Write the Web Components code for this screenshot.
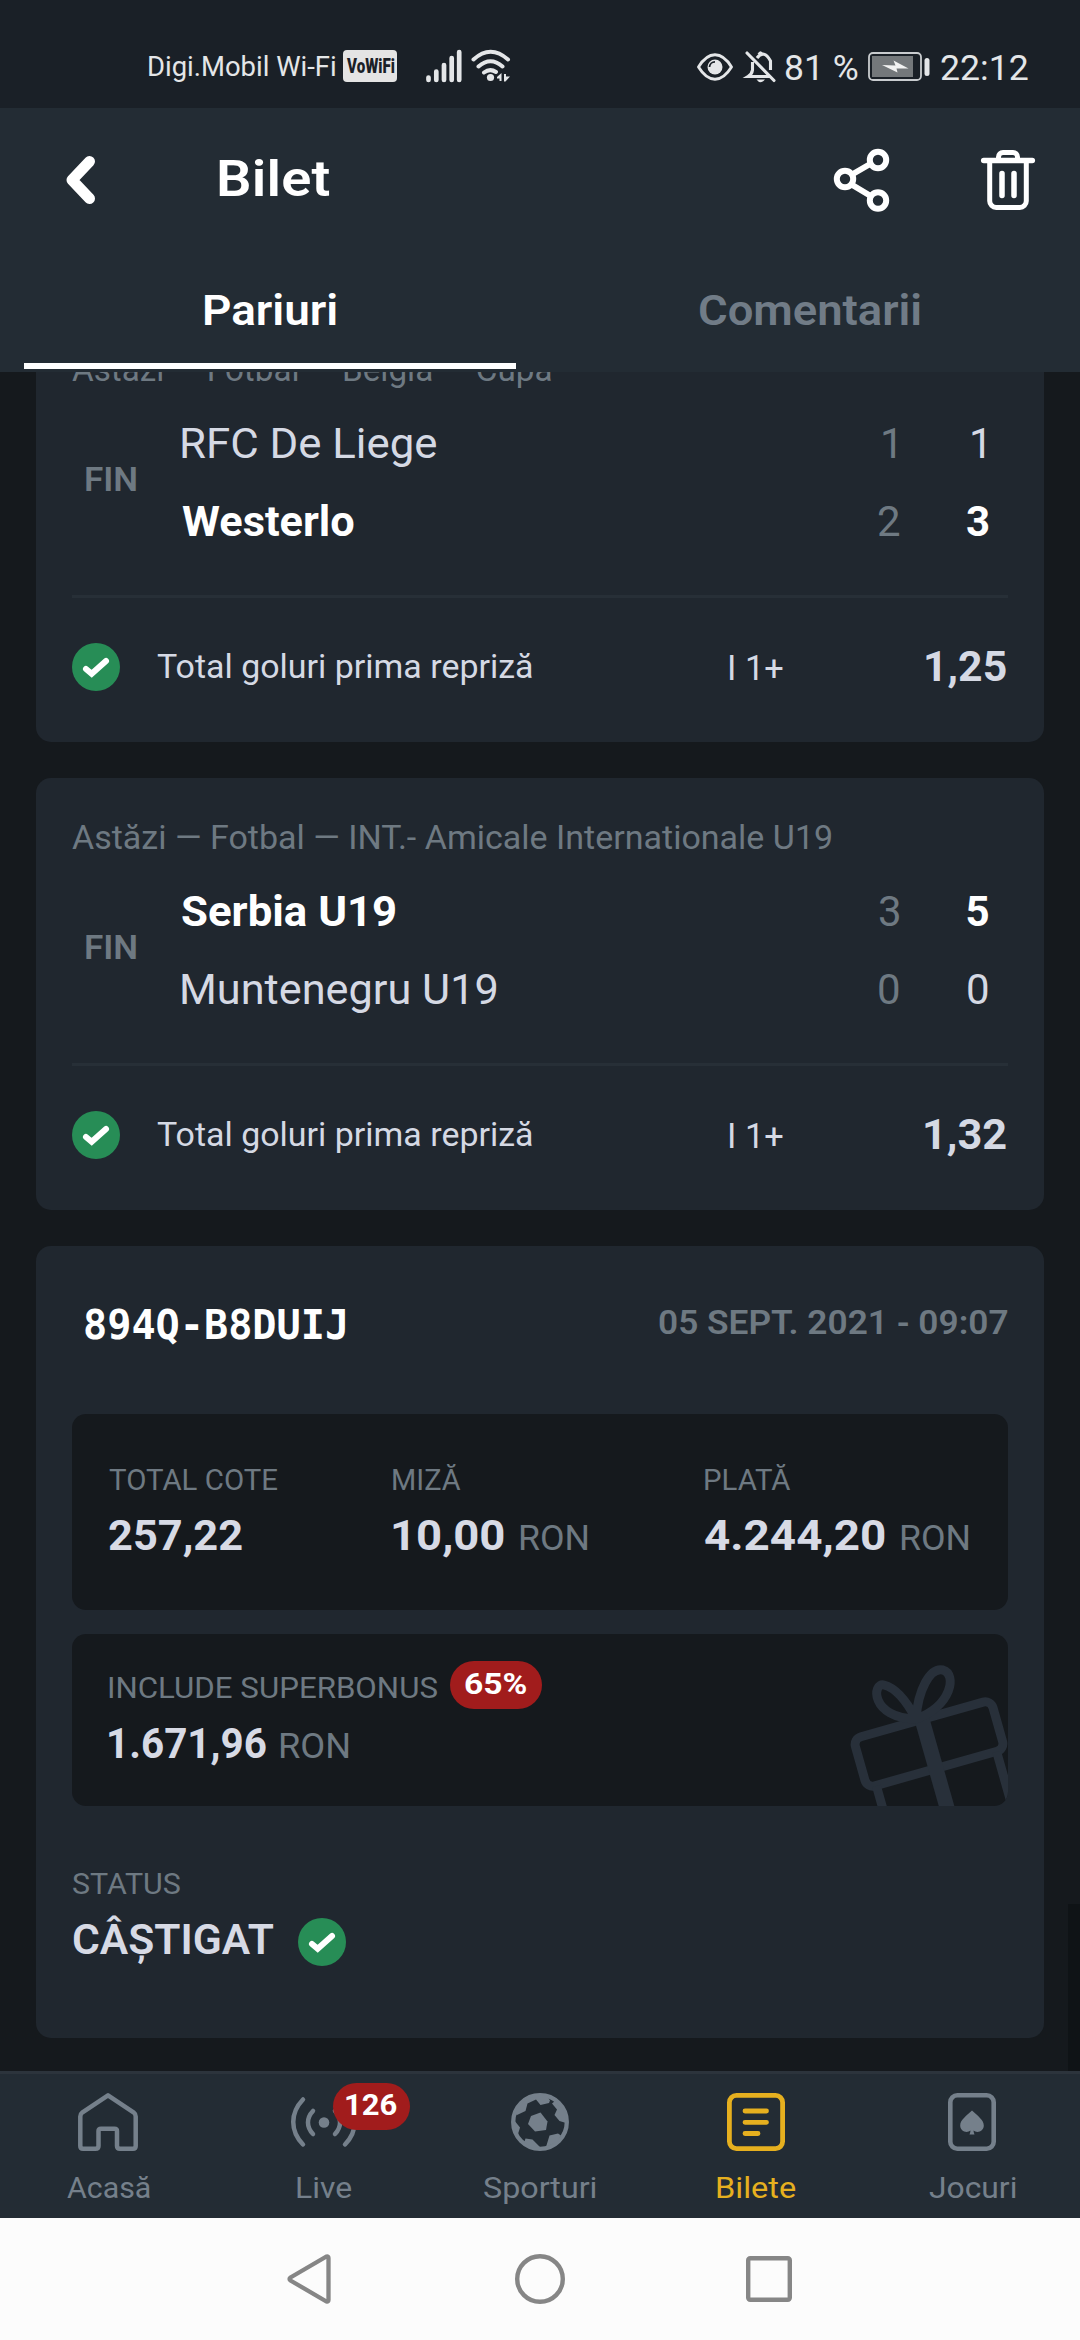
<!DOCTYPE html>
<html lang="ro">
<head>
<meta charset="utf-8">
<title>Bilet</title>
<style>
body{margin:0;background:#15191d;font-family:Roboto,"Noto Sans",sans-serif;width:1080px;height:2340px;overflow:hidden}
</style>
</head>
<body>
<ticket-app></ticket-app>
<script>
const LINE = {50:58,42:49,35:41,34:40,30:35,40:46,27:32,21:25};
const ctx = document.createElement('canvas').getContext('2d');

/* Text whose box is exactly its ink width; w widens the glyphs slightly, then the spacing, to that width. */
class FitText extends HTMLElement {
  connectedCallback() {
    if (this.shadowRoot) return;
    const size = +(this.getAttribute('size') || 34);
    const weight = this.getAttribute('weight') || 400;
    const family = this.hasAttribute('mono') ? '"DejaVu Sans Mono",monospace' : 'Roboto,"Noto Sans",sans-serif';
    const text = this.textContent;
    ctx.font = `${weight} ${size}px ${family}`;
    const m = ctx.measureText(text);
    const ink = m.actualBoundingBoxRight + m.actualBoundingBoxLeft;
    const w = this.hasAttribute('w') ? +this.getAttribute('w') : ink;
    const squeeze = +(this.getAttribute('squeeze') || Math.min(1.12, Math.max(.94, w / ink)));
    const gap = text.length > 1 ? (w / squeeze - ink) / (text.length - 1) : 0;
    const color = this.getAttribute('color');
    this.attachShadow({mode: 'open'}).innerHTML = `<style>
      :host{display:block;flex:none;width:${w}px;height:${LINE[size]}px;line-height:${LINE[size]}px;white-space:pre;
        font:${weight} ${size}px/${LINE[size]}px ${family};${color ? `color:${color};` : ''}}
      span{display:inline-block;margin-left:${m.actualBoundingBoxLeft * squeeze}px;letter-spacing:${gap}px;margin-right:-60px;
        ${squeeze !== 1 ? `transform:scaleX(${squeeze});transform-origin:0 0;` : ''}}
    </style><span><slot></slot></span>`;
  }
}

const ICONS = {
  back: [29,48,'<path d="M23.5 5.5 6 24l17.500 18.500" fill="none" stroke="#fff" stroke-width="11" stroke-linecap="round" stroke-linejoin="round"/>'],
  share: [56,64,'<g fill="none" stroke="#fff" stroke-width="6"><circle cx="11" cy="31" r="8.200"/><circle cx="44" cy="12" r="8.200"/><circle cx="44" cy="52.500" r="8.200"/><path d="M18 26.500 37 15.500M17.500 36.500 37.500 48.500"/></g>'],
  trash: [54,60,'<g fill="none" stroke="#fff" stroke-width="5" stroke-linecap="round"><path d="M2.700 10.500H51.300" stroke-width="5.500"/><path d="M17.500 9V7a4.500 4.500 0 0 1 4.500-4.500H32A4.500 4.500 0 0 1 36.500 7v2M8.700 12V51a6.500 6.500 0 0 0 6.500 6.500H38.800A6.500 6.500 0 0 0 45.300 51V12"/><path d="M21 23.500V45.500M33 23.500V45.500" stroke-width="5.500"/></g>'],
  check: [48,48,'<circle cx="24" cy="24" r="24" fill="#278d56"/><path d="M14 26 19.700 30.800 34 18" fill="none" stroke="#fff" stroke-width="6" stroke-linecap="round" stroke-linejoin="miter"/>'],
  home: [60,58,'<path d="M30 2.300 4.500 19.300Q2.300 21 2.300 23.500V53Q2.300 55.700 5 55.700H17.500Q20.500 55.700 20.500 53V38Q20.500 35.700 23 35.700H36.500Q39 35.700 39 38V53Q39 55.700 42 55.700H55Q57.700 55.700 57.700 53V23.500Q57.700 21 55.500 19.300Z" fill="none" stroke="#75808b" stroke-width="4.500" stroke-linejoin="round"/>'],
  live: [66,58,'<g fill="none" stroke="#75808b" stroke-width="4.500" stroke-linecap="round"><path d="M12 6.500C-1 20-1 38 12 51.500M22 18C15.300 25 15.300 34 22 41M44 18C50.700 25 50.700 34 44 41M54 6.500C67 20 67 38 54 51.500"/></g><circle cx="33" cy="29.500" r="5.300" fill="#75808b"/>'],
  ball: [58,58,'<circle cx="29" cy="29" r="26.800" fill="none" stroke="#75808b" stroke-width="4.300"/><g fill="#75808b"><path d="M20 23 29.500 19.500 36.500 28.500 35 37 24 38.500 17 31Z"/><path d="M13 8 24 3 36 3 39 7.500 38 10 29.500 12 25 6.500 16.500 10.500 14.500 18 6 22 3 20Z"/><path d="M44 8 54 19 55 30 48.500 28 43.500 22 46 16.500 41 10.500Z"/><path d="M54 36 46 49 35 54 38.500 42.500 47 40.500 50 42.500Z"/><path d="M30 55 20 54 10 47 13.500 48.500 14.500 45.500 21.500 46.500Z"/><path d="M3 27 9 34.500 7 41 3 36Z"/></g>'],
  slip: [58,58,'<rect x="2.400" y="2.400" width="53.200" height="53.200" rx="7" fill="none" stroke="#e6b01f" stroke-width="4.800"/><path d="M18 18H39.500M18 29.300H39.500M18 40.500H31" stroke="#e6b01f" stroke-width="4.800" stroke-linecap="round"/>'],
  spade: [48,58,'<rect x="2.300" y="2.300" width="43.400" height="53.400" rx="7" fill="none" stroke="#75808b" stroke-width="4.600"/><path d="M24 17.500C29 22.500 35.800 26.500 35.800 32.500 35.800 38.500 29 40.500 25.500 37.500Q25.500 39 26.500 41.500H21.500Q22.500 39 22.500 37.500C19 40.500 12.200 38.500 12.200 32.500 12.200 26.500 19 22.500 24 17.500Z" fill="#75808b"/>'],
  sysback: [44,50,'<path d="M39.500 2.500Q41.500 2 41.500 4V46Q41.500 48 39.500 47.500L3.500 26.500Q1.500 25 3.500 23.500Z" fill="none" stroke="#868686" stroke-width="4.300"/>'],
  syshome: [50,50,'<circle cx="25" cy="25" r="22.800" fill="none" stroke="#868686" stroke-width="4.400"/>'],
  sysapps: [46,46,'<rect x="2.200" y="2.200" width="41.600" height="41.600" rx="2" fill="none" stroke="#868686" stroke-width="4.400"/>'],
  signal: [36,34,'<g stroke="#e4e6e8" stroke-width="4.700" stroke-linecap="round"><path d="M2.500 28.500V31M10.300 22.500V31M18 16V31M25.700 9V31M33.200 3V31"/></g>'],
  wifi: [40,34,'<g fill="none" stroke="#e4e6e8" stroke-width="4" stroke-linecap="round"><path d="M2.500 10.500Q19.500-5 37 10.500M7.500 17.500Q19.500 7 31.500 17.500M13 23.500Q19 19 25 23"/></g><circle cx="19.500" cy="28.500" r="3.600" fill="#e4e6e8"/><path d="M30.500 24V32H28.500V29.500H26V28ZM33 25H35V27.500H39L34.500 32.500H33Z" fill="#e4e6e8"/>'],
  eye: [36,28,'<path d="M1.500 14Q9 1.800 18 1.800T34.500 14Q27 26.200 18 26.200T1.500 14Z" fill="none" stroke="#e4e6e8" stroke-width="2.900" stroke-linejoin="round"/><circle cx="18" cy="14" r="7.500" fill="#e4e6e8"/><path d="M12.500 14A5.500 5.500 0 0 1 18 8.800" fill="none" stroke="#1a2027" stroke-width="1.800"/>'],
  bell: [32,34,'<g fill="none" stroke="#e4e6e8" stroke-width="3.100"><path d="M7.500 12V20Q7 24 3 26.500H25M12 8Q19-1 25.500 11V20"/><path d="M2 3 29 30.500" stroke-linecap="round"/></g><path d="M12.500 4Q15.500-1.500 18.500 4ZM11.500 29.500H20Q15.500 35 11.500 29.500Z" fill="#e4e6e8"/>'],
  battery: [62,30,'<rect x="1" y="1" width="52" height="27" rx="4" fill="none" stroke="#c9cccf" stroke-width="1.800"/><rect x="4" y="4" width="41" height="21" fill="#74787b"/><path d="M14 13 27.500 13.500 25.500 8.500 40.500 16.500 28.500 16.500 29.500 20.500Z" fill="#f2f2f2"/><rect x="56.500" y="6" width="5" height="18" rx="2.500" fill="#e4e6e8"/>'],
  gift: [160,146,'<g fill="none" stroke="#28303a" stroke-width="9" stroke-linejoin="round"><g transform="translate(81 84) rotate(-15.800)"><rect x="-71.500" y="-25.500" width="143" height="51" rx="8"/><path d="M-62 26V100M63 26V100"/><path d="M0-26V100" stroke-width="15"/></g><path d="M68 59C22 58 24 22 36 25 48 28 58 40 68 59ZM68 59C70 30 82 7 95 10 109 14 104 46 68 59Z"/></g>']
};
class UiIcon extends HTMLElement {
  connectedCallback() {
    if (this.shadowRoot) return;
    const [w, h, art] = ICONS[this.getAttribute('name')];
    this.attachShadow({mode: 'open'}).innerHTML =
      `<style>:host{display:block;flex:none;width:${w}px;height:${h}px}svg{display:block;overflow:visible}</style>
       <svg width="${w}" height="${h}" viewBox="0 0 ${w} ${h}">${art}</svg>`;
  }
}

class StatusBar extends HTMLElement {
  connectedCallback() {
    this.attachShadow({mode: 'open'}).innerHTML = `<style>
      :host{display:flex;height:108px;background:#1a2027;color:#e4e6e8;padding:0 52px 0 149px;box-sizing:border-box;align-items:flex-start}
      .vo{margin:50px 0 0 8px;width:54px;height:32px;border-radius:4px;background:#e4e4e4;color:#1a2027;box-sizing:border-box;padding:4px 0 0 3px}
      .push{margin-left:auto}
    </style>
    <fit-text size="27" w="186" style="margin-top:51px">Digi.Mobil Wi-Fi</fit-text>
    <div class="vo"><fit-text size="21" w="48" weight="900" squeeze="0.720">VoWiFi</fit-text></div>
    <ui-icon name="signal" style="margin:49px 0 0 29px"></ui-icon>
    <ui-icon name="wifi" style="margin:49px 0 0 9px"></ui-icon>
    <ui-icon name="eye" class="push" style="margin-top:53px"></ui-icon>
    <ui-icon name="bell" style="margin:50px 0 0 12px"></ui-icon>
    <fit-text size="35" w="73" style="margin:48px 0 0 8px">81 %</fit-text>
    <ui-icon name="battery" style="margin:52px 0 0 10px"></ui-icon>
    <fit-text size="35" w="87" style="margin:48px 0 0 11px">22:12</fit-text>`;
  }
}

class AppHeader extends HTMLElement {
  connectedCallback() {
    this.attachShadow({mode: 'open'}).innerHTML = `<style>
      :host{display:block;height:264px;background:#232c34;color:#fff}
      .bar{display:flex;height:144px;padding:0 45px 0 66px;align-items:flex-start}
      .tabs{display:flex;gap:48px;padding:0 24px;height:120px}
      .tab{flex:1;display:flex;flex-direction:column;align-items:center;padding-top:34px}
      .off{color:#717c87}
      .line{align-self:stretch;height:6px;background:#fff;margin-top:28px}
    </style>
    <div class="bar">
      <ui-icon name="back" style="margin-top:48px"></ui-icon>
      <fit-text size="50" w="110" weight="600" style="margin:42px 0 0 124px">Bilet</fit-text>
      <ui-icon name="share" style="margin:40px 0 0 auto"></ui-icon>
      <ui-icon name="trash" style="margin:42px 0 0 91px"></ui-icon>
    </div>
    <div class="tabs">
      <div class="tab"><fit-text size="42" w="132" weight="600">Pariuri</fit-text><div class="line"></div></div>
      <div class="tab off"><fit-text size="42" w="221" weight="600">Comentarii</fit-text></div>
    </div>`;
  }
}

const BETS = [
  {meta: ['Astăzi — Fotbal — Belgia — Cupa', 479],
   rows: [['RFC De Liege', 254, '1', '1', 0], ['Westerlo', 172, '2', '3', 1]], odds: ['1,25', 80]},
  {meta: ['Astăzi — Fotbal — INT.- Amicale Internationale U19', 759],
   rows: [['Serbia U19', 213, '3', '5', 1], ['Muntenegru U19', 314, '0', '0', 0]], odds: ['1,32', 81]}
];
class BetCard extends HTMLElement {
  connectedCallback() {
    const b = BETS[this.getAttribute('index')];
    const row = ([n, w, half, full, win]) => `<div class="row ${win ? 'win' : ''}">
      <fit-text size="42" w="${w}" weight="${win ? 700 : 400}">${n}</fit-text>
      <div class="num half"><fit-text size="42">${half}</fit-text></div>
      <div class="num"><fit-text size="42" weight="${win ? 700 : 400}">${full}</fit-text></div></div>`;
    this.attachShadow({mode: 'open'}).innerHTML = `<style>
      :host{display:block;height:432px;box-sizing:border-box;background:#20272f;border-radius:15px;padding:39px 36px 0;color:#d5d9e4}
      .match{display:flex;margin-top:30px;height:127px}
      .teams{flex:1;display:flex;flex-direction:column;gap:29px;margin-left:46px;padding-right:10px}
      .row{display:flex}.win{color:#fff}
      .num{width:40px;margin-left:49px;display:flex;justify-content:center}
      .half{margin-left:auto;color:#6e7982}
      .rule{height:3px;background:#272f37;margin-top:49px}
      .pick{display:flex;align-items:flex-start}
    </style>
    <fit-text size="34" w="${b.meta[1]}" color="#6e7982">${b.meta[0]}</fit-text>
    <div class="match">
      <fit-text size="34" w="50" weight="600" color="#6e7982" style="margin:40px 0 0 14px">FIN</fit-text>
      <div class="teams">${b.rows.map(row).join('')}</div>
    </div>
    <div class="rule"></div>
    <div class="pick">
      <ui-icon name="check" style="margin-top:45px"></ui-icon>
      <fit-text size="34" w="375" style="margin:48px 0 0 37px">Total goluri prima repriză</fit-text>
      <fit-text size="35" w="53" style="margin:50px 0 0 198px">I 1+</fit-text>
      <fit-text size="42" w="${b.odds[1]}" weight="700" style="margin:44px 2px 0 auto">${b.odds[0]}</fit-text>
    </div>`;
  }
}

class MoneyStat extends HTMLElement {
  connectedCallback() {
    const a = n => this.getAttribute(n);
    this.attachShadow({mode: 'open'}).innerHTML = `<style>
      :host{display:block;color:#d7dae5}
      .head{display:flex;align-items:flex-start;color:#6e7982}
      .val{display:flex;align-items:baseline;gap:16px;margin-top:14px}
    </style>
    <div class="head"><fit-text size="30" w="${a('lw')}">${a('label')}</fit-text></div>
    <div class="val"><fit-text size="42" w="${a('vw')}" weight="700">${a('value')}</fit-text>
    ${a('unit') ? `<fit-text size="35" w="68" color="#6e7982">${a('unit')}</fit-text>` : ''}<slot></slot></div>`;
  }
}

class TicketCard extends HTMLElement {
  connectedCallback() {
    this.attachShadow({mode: 'open'}).innerHTML = `<style>
      :host{display:block;height:792px;box-sizing:border-box;background:#20272f;border-radius:15px;padding:0 36px}
      .top{display:flex;justify-content:space-between;height:112px;padding:56px 1px 0 13px}
      .box{background:#15191d;border-radius:14px;box-sizing:border-box;overflow:hidden}
      .totals{height:196px;display:grid;grid-template-columns:284px 312px auto;padding:48px 0 0 37px}
      .bonus{height:172px;margin-top:24px;display:flex;align-items:flex-end;justify-content:space-between;padding-left:37px}
      .info{height:145px}
      .line{display:flex;align-items:flex-start;color:#6e7982}
      .badge{width:92px;height:48px;border-radius:24px;background:#a11c1c;color:#fff;display:flex;justify-content:center;padding-top:5px;box-sizing:border-box;margin-left:13px}
      .amount{display:flex;align-items:baseline;gap:14px;margin-top:10px}
      .status{padding:60px 0 0 1px;color:#6e7982}
      .won{display:flex;align-items:flex-start;margin-top:14px}
    </style>
    <div class="top">
      <fit-text mono size="40" w="260" weight="700" color="#fff">894Q-B8DUIJ</fit-text>
      <fit-text size="34" w="348" weight="600" color="#6e7982">05 SEPT. 2021 - 09:07</fit-text>
    </div>
    <div class="box totals">
      <money-stat label="TOTAL COTE" lw="169" value="257,22" vw="133"></money-stat>
      <money-stat label="MIZĂ" lw="68" value="10,00" vw="111" unit="RON"></money-stat>
      <money-stat label="PLATĂ" lw="86" value="4.244,20" vw="180" unit="RON"></money-stat>
    </div>
    <div class="box bonus">
      <div class="info">
        <div class="line"><fit-text size="30" w="328" style="margin-top:9px">INCLUDE SUPERBONUS</fit-text>
          <div class="badge"><fit-text size="30" w="61" weight="700">65%</fit-text></div></div>
        <div class="amount"><fit-text size="42" w="157" weight="700" color="#d7dae5">1.671,96</fit-text><fit-text size="35" w="69" color="#6e7982">RON</fit-text></div>
      </div>
      <ui-icon name="gift"></ui-icon>
    </div>
    <div class="status">
      <fit-text size="30" w="107">STATUS</fit-text>
      <div class="won"><fit-text size="42" w="200" weight="600" color="#d7dae5">CÂȘTIGAT</fit-text><ui-icon name="check" style="margin:3px 0 0 25px"></ui-icon></div>
    </div>`;
  }
}

class BottomNav extends HTMLElement {
  connectedCallback() {
    const item = (icon, label, w, extra = '', cls = '') => `<div class="item ${cls}"><ui-icon name="${icon}"></ui-icon>${extra}
      <fit-text size="30" w="${w}">${label}</fit-text></div>`;
    this.attachShadow({mode: 'open'}).innerHTML = `<style>
      :host{display:flex;height:147px;box-sizing:border-box;border-top:3px solid #2c343c;background:#232c34;color:#75808b}
      .item{flex:1;display:flex;flex-direction:column;align-items:center;gap:19px;padding-top:19px;position:relative}
      .on{color:#e6b01f}
      .badge{position:absolute;left:117px;top:9px;width:77px;height:47px;border-radius:24px;background:#a11c1c;color:#fff;display:flex;justify-content:center;padding-top:4px;box-sizing:border-box}
    </style>
    ${item('home', 'Acasă', 83)}
    ${item('live', 'Live', 54, '<div class="badge"><fit-text size="30" w="51" weight="700">126</fit-text></div>')}
    ${item('ball', 'Sporturi', 112)}
    ${item('slip', 'Bilete', 78, '', 'on')}
    ${item('spade', 'Jocuri', 87)}`;
  }
}

class SystemNav extends HTMLElement {
  connectedCallback() {
    this.attachShadow({mode: 'open'}).innerHTML = `<style>
      :host{display:flex;height:122px;background:#fcfcfc;align-items:center;padding-left:287px}
    </style>
    <ui-icon name="sysback"></ui-icon><ui-icon name="syshome" style="margin-left:184px"></ui-icon><ui-icon name="sysapps" style="margin-left:181px"></ui-icon>`;
  }
}

class TicketApp extends HTMLElement {
  connectedCallback() {
    this.attachShadow({mode: 'open'}).innerHTML = `<style>
      :host{display:flex;flex-direction:column;width:1080px;height:2340px}
      main{position:relative;height:1699px;overflow:hidden;background:#15191d}
      .list{display:flex;flex-direction:column;gap:36px;padding:0 36px;margin-top:-62px}
      .thumb{position:absolute;right:0;top:1532px;width:12px;height:167px;background:#0f1316}
    </style>
    <status-bar></status-bar><app-header></app-header>
    <main><div class="list"><bet-card index="0"></bet-card><bet-card index="1"></bet-card><ticket-card></ticket-card></div><div class="thumb"></div></main>
    <bottom-nav></bottom-nav><system-nav></system-nav>`;
  }
}

customElements.define('fit-text', FitText);
customElements.define('ui-icon', UiIcon);
customElements.define('status-bar', StatusBar);
customElements.define('app-header', AppHeader);
customElements.define('bet-card', BetCard);
customElements.define('money-stat', MoneyStat);
customElements.define('ticket-card', TicketCard);
customElements.define('bottom-nav', BottomNav);
customElements.define('system-nav', SystemNav);
customElements.define('ticket-app', TicketApp);
</script>
</body>
</html>
